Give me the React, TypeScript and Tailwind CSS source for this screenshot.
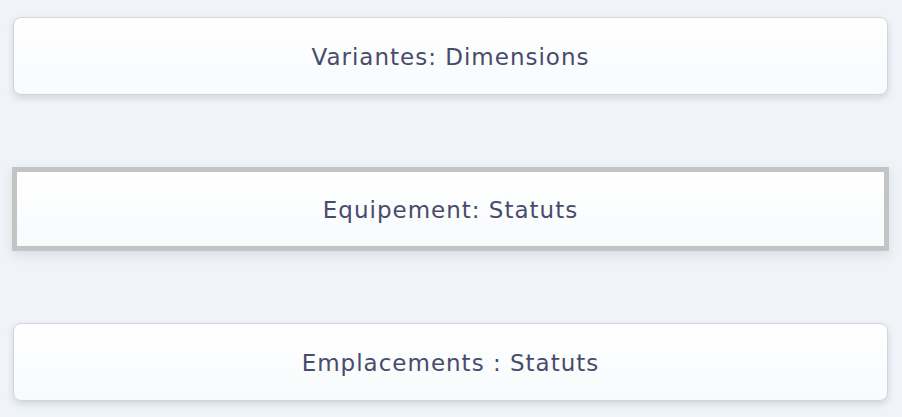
const cards = [
  { label: "Variantes: Dimensions", active: false },
  { label: "Equipement: Statuts", active: true },
  { label: "Emplacements : Statuts", active: false },
];

function Card({ label, active }: { label: string; active: boolean }) {
  if (active) {
    return (
      <div className="-mx-px flex h-[84px] items-center justify-center border-[5px] border-[#c4c4c4] bg-gradient-to-b from-white to-[#f8fafc] shadow-[0_4px_10px_rgba(148,163,184,0.25)]">
        <span className="pt-[3px] text-[23px] tracking-[1px] text-[#474c6a]">{label}</span>
      </div>
    );
  }
  return (
    <div className="flex h-[78px] items-center justify-center rounded-lg border border-[#cfd6df] bg-gradient-to-b from-white to-[#f8fafc] shadow-[0_3px_6px_rgba(148,163,184,0.35)]">
      <span className="pt-[3px] text-[23px] tracking-[1px] text-[#474c6a]">{label}</span>
    </div>
  );
}

export default function App() {
  return (
    <div
      className="flex min-h-[417px] flex-col gap-[72px] bg-[#f0f3f7] pl-[13px] pr-[14px] pt-[17px]"
      style={{ fontFamily: "'DejaVu Sans', sans-serif" }}
    >
      {cards.map((c) => (
        <Card key={c.label} label={c.label} active={c.active} />
      ))}
    </div>
  );
}
